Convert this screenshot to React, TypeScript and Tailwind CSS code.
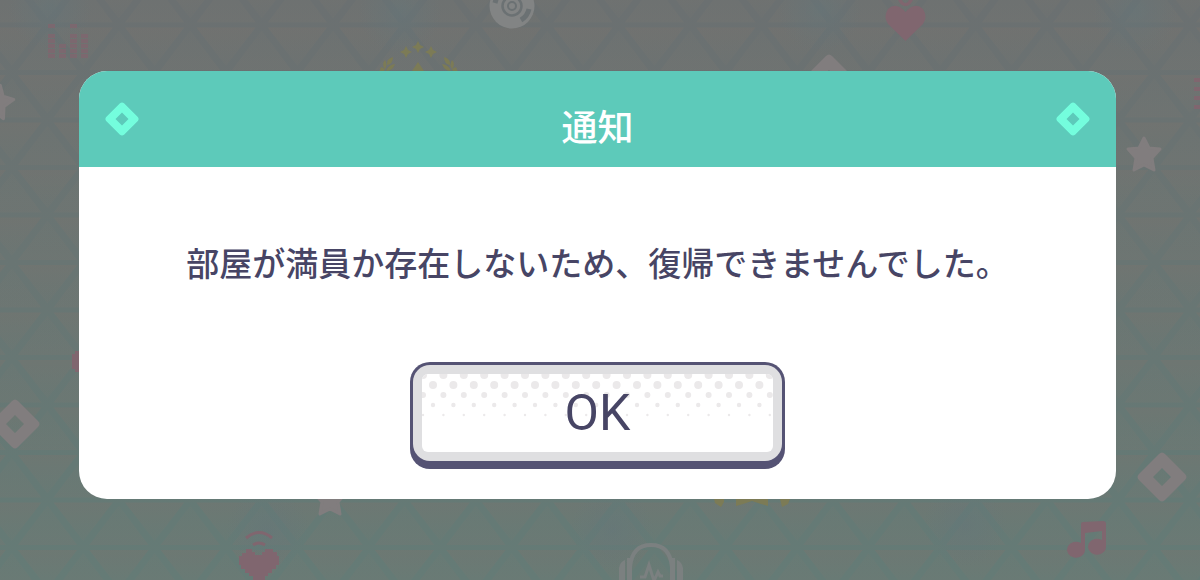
const COL = 71.4;
const ROW = 47.5;

type Point = [number, number];

function buildTriangles(): { points: string; up: boolean }[] {
  const out: { points: string; up: boolean }[] = [];
  for (let r = -1; r < 12; r++) {
    const top = 24.5 + r * ROW;
    const topX = r % 2 === 0 ? 47.5 : 83.2;
    for (let c = -3; c < 18; c++) {
      const x = topX + c * COL;
      const down: Point[] = [
        [x + 6, top + 3],
        [x + COL - 6, top + 3],
        [x + COL / 2, top + ROW - 6],
      ];
      const up: Point[] = [
        [x, top + 6],
        [x + COL / 2 - 6, top + ROW - 2],
        [x - COL / 2 + 6, top + ROW - 2],
      ];
      out.push({ points: down.map((p) => p.join(",")).join(" "), up: false });
      out.push({ points: up.map((p) => p.join(",")).join(" "), up: true });
    }
  }
  return out;
}

const TRIANGLES = buildTriangles();
const GLOWS: Point[] = [[50, 8], [400, 12], [820, 10], [1135, 12], [268, 530], [612, 530], [965, 525]];
const STAR = "M0-16 5-6 16-5 8 4 10 16 0 11-10 16-8 4-16-5-5-6Z";
const DIAMOND = "M-3-23Q0-26 3-23L23-3Q26 0 23 3L3 23Q0 26-3 23L-23 3Q-26 0-23-3ZM0-9-9 0 0 9 9 0Z";
const SPARK = "M0-6 2-2 6 0 2 2 0 6-2 2-6 0-2-2Z";
const EQUALIZER: [number, number[]][] = [
  [48, [24, 34, 39, 44, 49, 54]],
  [59, [44, 49, 54]],
  [70, [24, 34, 39, 44, 49, 54]],
  [81, [34, 39, 44, 49, 54]],
];

function Backdrop() {
  return (
    <svg
      aria-hidden="true"
      className="absolute inset-0 size-full"
      viewBox="0 0 1200 580"
      preserveAspectRatio="xMidYMid slice"
    >
      <defs>
        <linearGradient id="base" x1="0" y1="0" x2="0" y2="1">
          <stop offset="0" stopColor="#6b7071" />
          <stop offset="0.45" stopColor="#697573" />
          <stop offset="0.8" stopColor="#657975" />
          <stop offset="1" stopColor="#657b76" />
        </linearGradient>
        <linearGradient id="down" x1="0" y1="0" x2="0" y2="1">
          <stop offset="0" stopColor="#7b746e" stopOpacity="0.36" />
          <stop offset="1" stopColor="#7b7971" stopOpacity="0.12" />
        </linearGradient>
        <linearGradient id="up" x1="0" y1="0" x2="0" y2="1">
          <stop offset="0" stopColor="#7b7971" stopOpacity="0.12" />
          <stop offset="1" stopColor="#7b7771" stopOpacity="0.26" />
        </linearGradient>
        <radialGradient id="glow">
          <stop offset="0" stopColor="#64767a" stopOpacity="0.5" />
          <stop offset="1" stopColor="#64767a" stopOpacity="0" />
        </radialGradient>
      </defs>
      <rect width="1200" height="580" fill="url(#base)" />
      {TRIANGLES.map((t, i) => (
        <polygon key={i} points={t.points} fill={t.up ? "url(#up)" : "url(#down)"} />
      ))}
      {GLOWS.map(([x, y]) => (
        <circle key={x} cx={x} cy={y} r="42" fill="url(#glow)" />
      ))}

      <g fill="#80666f">
        <g opacity="0.8">
          {EQUALIZER.map(([x, rows]) =>
            rows.map((y) => <rect key={`${x}-${y}`} x={x} y={y} width="7" height="4" />),
          )}
        </g>
        <path d="M905.500 41 888 24Q883 17 888 9 896 1 905.500 12 915 1 923 9 928 17 923 24Z" />
        <path d="M898 0Q901 6 905.500 6 910 6 913 0H909Q908 3 905.500 3 903 3 902 0Z" />
        <path d="M1194 78h6v4h-6zM1194 87h6v4h-6zM1194 96h6v4h-6zM1194 105h6v4h-6z" />
        <path d="M80 351h-5v3h-3v15h3v3h5z" />
        <path d="M246 549h6v3h3v3h7v-3h3v-3h8v3h4v4h2v9h-3v4h-4v4h-4v3h-3v4h-12v-4h-4v-3h-4v-4h-4v-4h-2v-9h3v-3h4z" />
        <path d="M246 538Q259 527 272 538M253 545Q259 541 265 545" fill="none" stroke="#80666f" strokeWidth="3" />
        <path d="M1081 524q0-2 2-2l20-1q3 0 3 3v23a9 8 0 1 1-4-7v-9l-17 2v17a9 8 0 1 1-4-7z" />
      </g>

      <g fill="#817d7e">
        <circle cx="512" cy="6" r="22.500" fill="#828484" />
        <circle cx="512" cy="6" r="9.500" fill="none" stroke="#6b7173" strokeWidth="2.500" />
        <circle cx="512" cy="6" r="4" fill="none" stroke="#6b7173" strokeWidth="2" />
        <path d="M529 9A17 17 0 0 1 521 20M495 3 497-4" fill="none" stroke="#6b7173" strokeWidth="5" />
        <path d={DIAMOND} fillRule="evenodd" transform="translate(829 79)" />
        <path d={DIAMOND} fillRule="evenodd" transform="translate(15 424)" />
        <path d={DIAMOND} fillRule="evenodd" transform="translate(1162 477)" />
        <g stroke="#817d7e" strokeWidth="3" strokeLinejoin="round">
          <path d={STAR} transform="translate(1144 154)" />
          <path d={STAR} transform="translate(-3 101) rotate(12)" />
          <path d={STAR} transform="translate(330 498)" />
        </g>
        <path d="M630 580V567Q632 545 651 545 670 545 672 567V580" fill="none" stroke="#7b8080" strokeWidth="4" />
        <path d="M627 558h5v22h-5zM670 558h5v22h-5zM619 580V568q1-6 6-8v20zM683 580V568q-1-6-6-8v20z" fill="#7b8080" />
        <path d="M640 577h5l4-12 5 16 4-9 2 4h3" fill="none" stroke="#7b8080" strokeWidth="3" />
      </g>

      <g fill="#7c7b56">
        <path d={SPARK} transform="translate(406 52)" />
        <path d={SPARK} transform="translate(418 47)" />
        <path d={SPARK} transform="translate(431 52)" />
        <path d="M418 62 424 71H412Z" />
        <path d="M393 57Q386 59 387 65 393 64 393 57M385 60Q381 64 385 69 388 65 385 60M395 64Q388 65 386 71 393 71 395 64M381 67l4 2-1 3h-5z" />
        <path d="M444 57Q451 59 450 65 444 64 444 57M452 60Q456 64 452 69 449 65 452 60M442 64Q449 65 451 71 444 71 442 64M456 67l-4 2 1 3h5z" />
        <path d="M736 498h32v8l-7-2-9-3-9 3-7 2zM714 499h10v3l-3 5-6-4zM780 499h10l-2 5-6 3z" />
      </g>
    </svg>
  );
}

function HeaderDiamond() {
  return (
    <svg aria-hidden="true" viewBox="0 0 34 34" className="size-[34px] shrink-0">
      <path
        fill="#74fddd"
        fillRule="evenodd"
        d="M15 1.200Q17-.4 19 1.200L32.800 15Q34.400 17 32.800 19L19 32.800Q17 34.400 15 32.800L1.200 19Q-.4 17 1.200 15ZM17 10.500 10.500 17 17 23.500 23.500 17Z"
      />
    </svg>
  );
}

const DOT_ROWS = [
  { y: 1, r: 4, shift: 1 },
  { y: 11, r: 4, shift: 11 },
  { y: 21, r: 3, shift: 1 },
  { y: 31, r: 2.2, shift: 11 },
  { y: 41, r: 1.2, shift: 1 },
];

function Halftone() {
  return (
    <svg aria-hidden="true" className="absolute inset-x-0 top-0 h-11 w-full" fill="#ebe9ea">
      {DOT_ROWS.map((row) =>
        Array.from({ length: 18 }, (_, i) => (
          <circle key={`${row.y}-${i}`} cx={row.shift + i * 20.4} cy={row.y} r={row.r} />
        )),
      )}
    </svg>
  );
}

export default function App() {
  return (
    <main
      className="relative min-h-screen overflow-hidden bg-[#697572] pt-[71px] pr-[84px] pb-20 pl-[79px] text-[#474565]"
      style={{ fontFamily: '"Noto Sans CJK JP", sans-serif' }}
    >
      <Backdrop />
      <section
        role="dialog"
        aria-modal="true"
        aria-labelledby="dialog-title"
        aria-describedby="dialog-message"
        className="relative overflow-hidden rounded-[28px] bg-white"
      >
        <header className="flex h-24 items-center justify-between bg-[#5dcaba] px-[26px]">
          <HeaderDiamond />
          <h1 id="dialog-title" className="pt-3 text-4xl leading-10 font-medium text-white">
            通知
          </h1>
          <HeaderDiamond />
        </header>
        <div className="flex flex-col items-center px-8 pt-[75px] pb-[30px]">
          <p id="dialog-message" className="text-center text-[33px] leading-10 font-medium">
            部屋が満員か存在しないため、復帰できませんでした。
          </p>
          <button
            type="button"
            className="mt-20 w-[375px] max-w-full cursor-pointer rounded-[20px] bg-[#555374] px-[3px] pt-[3px] pb-2"
          >
            <span className="block rounded-[17px] bg-[#dfdfe1] p-[9px]">
              <span className="relative flex h-[78px] items-center justify-center overflow-hidden rounded-md bg-white">
                <Halftone />
                <span className="relative font-[Roboto,sans-serif] text-[50px] leading-none">OK</span>
              </span>
            </span>
          </button>
        </div>
      </section>
    </main>
  );
}
